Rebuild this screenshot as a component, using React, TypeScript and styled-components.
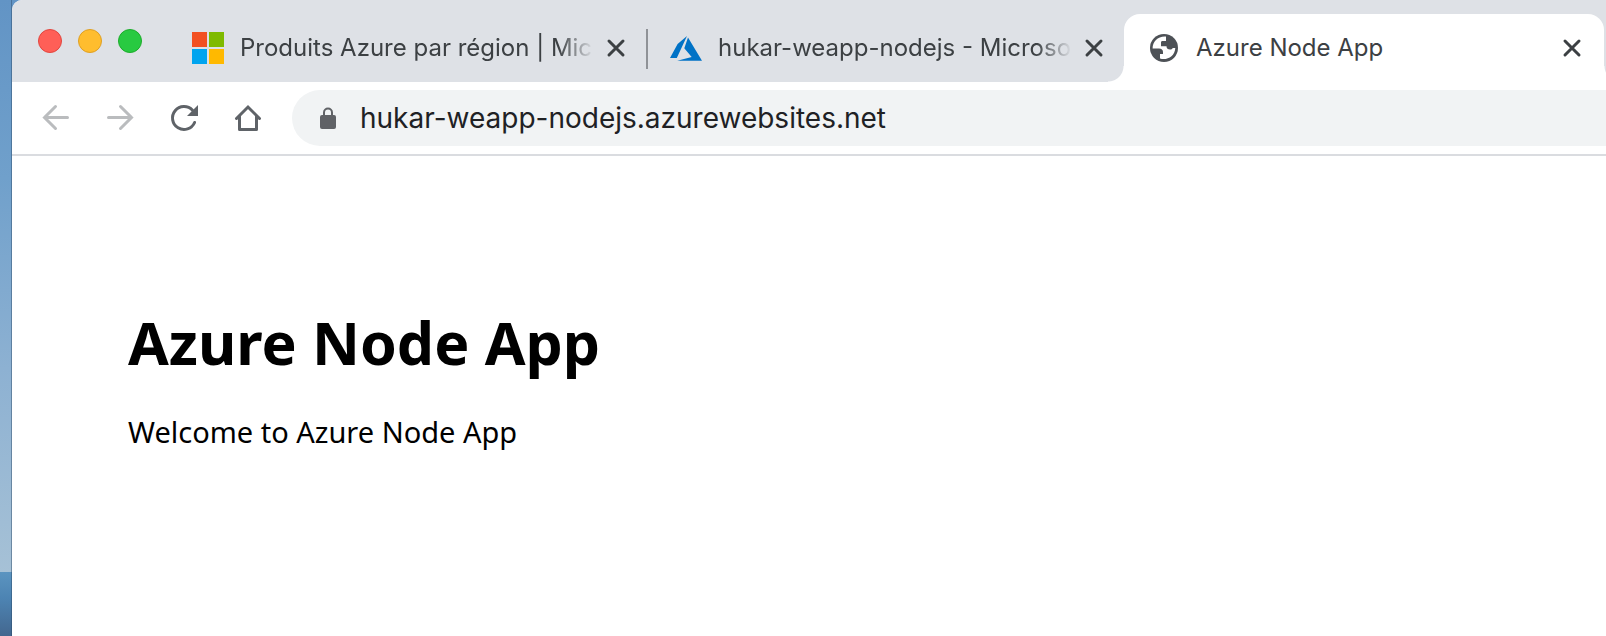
import React, { useState } from 'react';
import styled, { createGlobalStyle, css } from 'styled-components';

const uiFont = "Inter, Roboto, 'Liberation Sans', sans-serif";
const pageFont = "'Noto Sans', 'Open Sans', sans-serif";

const GlobalStyle = createGlobalStyle`
  *, *::before, *::after { box-sizing: border-box; }
  body { margin: 0; background: #fff; }
`;

const Desktop = styled.div`
  display: flex;
  min-height: 100vh;
  padding-left: 12px;
  background:
    linear-gradient(to right, transparent 11px, rgba(40, 70, 100, 0.45) 11px, rgba(40, 70, 100, 0.45) 12px, transparent 12px),
    linear-gradient(to bottom, #6294c5 0%, #70a0cb 28%, #8db1d2 58%, #a6c1d6 90%, #5b94c0 90%, #4d84b3 94%, #43678f 100%);
`;

const BrowserWindow = styled.div`
  display: flex;
  flex: 1;
  flex-direction: column;
  min-width: 0;
  overflow: hidden;
  background: #fff;
  border-top-left-radius: 10px;
`;

const TabStrip = styled.header`
  display: flex;
  height: 82px;
  padding-top: 14px;
  background: #dee1e6;
`;

const WindowControls = styled.div`
  display: flex;
  flex: none;
  gap: 16px;
  width: 156px;
  padding: 15px 0 0 26px;
`;

const WindowButton = styled.button<{ $fill: string; $edge: string }>`
  width: 24px;
  height: 24px;
  padding: 0;
  border: 1px solid ${(p) => p.$edge};
  border-radius: 50%;
  background: ${(p) => p.$fill};
`;

const TabList = styled.nav`
  display: flex;
  flex: 1;
  min-width: 0;
`;

const Tab = styled.div<{ $active: boolean; $divided: boolean }>`
  position: relative;
  display: flex;
  flex: 0 1 ${(p) => (p.$active ? 480 : 478)}px;
  align-items: center;
  min-width: 0;
  padding: 0 ${(p) => (p.$active ? 22 : 20)}px 0 24px;

  ${(p) =>
    p.$divided &&
    css`
      &::before {
        content: '';
        position: absolute;
        top: 15px;
        left: 0;
        width: 2px;
        height: 40px;
        background: #8f9297;
      }
    `}

  ${(p) =>
    p.$active &&
    css`
      background: #fff;
      border-radius: 16px 16px 0 0;

      &::before,
      &::after {
        content: '';
        position: absolute;
        bottom: 0;
        width: 16px;
        height: 16px;
      }
      &::before {
        right: 100%;
        background: radial-gradient(circle at 0 0, transparent 15px, #fff 16px);
      }
      &::after {
        left: 100%;
        background: radial-gradient(circle at 100% 0, transparent 15px, #fff 16px);
      }
    `}
`;

const TabLink = styled.a<{ $fades: boolean }>`
  flex: 1;
  min-width: 0;
  margin-left: 16px;
  overflow: hidden;
  color: #3c4043;
  font: 400 24px/32px ${uiFont};
  text-decoration: none;
  white-space: nowrap;
  ${(p) =>
    p.$fades &&
    css`
      mask-image: linear-gradient(to left, transparent 12px, #000 48px);
    `}
`;

const IconButton = styled.button`
  display: flex;
  flex: none;
  padding: 0;
  border: 0;
  background: none;
  color: #3c4043;
`;

const TabIcon = styled.svg`
  flex: none;
  width: 32px;
  height: 32px;
`;

const Toolbar = styled.div`
  display: flex;
  align-items: center;
  gap: 32px;
  height: 74px;
  padding: 8px 0 8px 28px;
  border-bottom: 2px solid #dadce0;
`;

const NavButton = styled(IconButton)`
  color: #5f6368;
  &:disabled { color: #babcbe; }
`;

const AddressBar = styled.label`
  display: flex;
  flex: 1;
  align-items: center;
  gap: 24px;
  min-width: 0;
  height: 56px;
  margin-left: -4px;
  padding-left: 28px;
  border-radius: 28px 0 0 28px;
  background: #f1f3f4;
`;

const AddressInput = styled.input`
  flex: 1;
  min-width: 0;
  padding: 0;
  border: 0;
  outline: 0;
  background: none;
  color: #202124;
  font: 400 28px/36px ${uiFont};
`;

const Page = styled.main`
  padding: 146px 116px;
  color: #000;
  font-family: ${pageFont};
`;

const Title = styled.h1`
  margin: 0;
  font-size: 59px;
  line-height: 80px;
`;

const Welcome = styled.p`
  margin: 30px 0 0;
  font-size: 29px;
  line-height: 40px;
`;

const MicrosoftIcon = () => (
  <TabIcon viewBox="0 0 32 32" aria-hidden="true">
    <path fill="#f25022" d="M0 0h15v15H0z" />
    <path fill="#7fba00" d="M17 0h15v15H17z" />
    <path fill="#00a4ef" d="M0 17h15v15H0z" />
    <path fill="#ffb900" d="M17 17h15v15H17z" />
  </TabIcon>
);

const AzureIcon = () => (
  <TabIcon viewBox="0 0 32 32" aria-hidden="true">
    <path fill="#0072c6" d="M17 4 7.600 12 0 26h6.800zM18 5.500 14.300 16.200l7.400 8.700L7.200 28.700H32z" />
  </TabIcon>
);

const GlobeIcon = () => (
  <TabIcon viewBox="0 0 32 32" aria-hidden="true">
    <circle cx="16" cy="16" r="14" fill="#4d5156" />
    <path
      fill="#fff"
      d="M18 4.600C10 4 4.600 9.500 4.600 16.500H11c2.500 0 4 1.300 4 3.500v2h-3v4.600c7 2 14.800-2 15.300-10.600h-2.600c-.5 1-1.400 1.600-2.600 1.600-2.200 0-3.600-1-3.600-3.300H13v-3.800c0-1.200.8-1.600 2-1.600h3z"
    />
  </TabIcon>
);

const CloseIcon = () => (
  <svg width="20" height="20" viewBox="0 0 20 20" fill="none" stroke="currentColor" strokeWidth="3" strokeLinecap="round" aria-hidden="true">
    <path d="m3 3 14 14M17 3 3 17" />
  </svg>
);

const ArrowIcon = ({ forward = false }: { forward?: boolean }) => (
  <svg width="32" height="32" viewBox="0 0 32 32" fill="none" stroke="currentColor" strokeWidth="3" strokeLinecap="round" aria-hidden="true">
    <path d={forward ? 'M4.500 15.500h23M16.500 4.500l11 11-11 11' : 'M27.500 15.500h-23M15.500 4.500l-11 11 11 11'} />
  </svg>
);

const ReloadIcon = () => (
  <svg width="32" height="32" viewBox="0 0 32 32" fill="none" aria-hidden="true">
    <path d="M26.600 20.500A11.500 11.500 0 1 1 24.500 8.200" stroke="currentColor" strokeWidth="3" strokeLinecap="round" />
    <path d="M30 3v11H19z" fill="currentColor" />
  </svg>
);

const HomeIcon = () => (
  <svg width="32" height="32" viewBox="0 0 32 32" fill="none" stroke="currentColor" strokeWidth="3" strokeLinecap="round" aria-hidden="true">
    <path d="M4.500 16.500 16 5l11.500 11.500" />
    <path d="M7.500 14.500v13h17v-13" strokeLinejoin="round" />
  </svg>
);

const LockIcon = () => (
  <svg width="16" height="24" viewBox="0 0 16 24" aria-hidden="true">
    <path d="M4 11V6.500a4 4 0 0 1 8 0V11" fill="none" stroke="#606266" strokeWidth="2" />
    <rect y="9" width="16" height="14" rx="2" fill="#606266" />
  </svg>
);

const tabs = [
  { title: 'Produits Azure par région | Mic', Icon: MicrosoftIcon, fades: true },
  { title: 'hukar-weapp-nodejs - Microso', Icon: AzureIcon, fades: true },
  { title: 'Azure Node App', Icon: GlobeIcon, fades: false },
];

const windowButtons = [
  { label: 'Close window', fill: '#ff5f57', edge: '#e2463f' },
  { label: 'Minimize window', fill: '#ffbd2e', edge: '#dfa023' },
  { label: 'Zoom window', fill: '#28ca41', edge: '#1dad2b' },
];

export default function App() {
  const [address, setAddress] = useState('hukar-weapp-nodejs.azurewebsites.net');
  return (
    <>
      <GlobalStyle />
      <Desktop>
        <BrowserWindow>
          <TabStrip>
            <WindowControls>
              {windowButtons.map((b) => (
                <WindowButton key={b.label} aria-label={b.label} $fill={b.fill} $edge={b.edge} />
              ))}
            </WindowControls>
            <TabList aria-label="Tabs">
              {tabs.map(({ title, Icon, fades }, i) => (
                <Tab key={title} $active={i === 2} $divided={i === 1}>
                  <Icon />
                  <TabLink href="#" $fades={fades}>{title}</TabLink>
                  <IconButton aria-label={`Close ${title}`}>
                    <CloseIcon />
                  </IconButton>
                </Tab>
              ))}
            </TabList>
          </TabStrip>
          <Toolbar>
            <NavButton aria-label="Back" disabled><ArrowIcon /></NavButton>
            <NavButton aria-label="Forward" disabled><ArrowIcon forward /></NavButton>
            <NavButton aria-label="Reload"><ReloadIcon /></NavButton>
            <NavButton aria-label="Home"><HomeIcon /></NavButton>
            <AddressBar>
              <LockIcon />
              <AddressInput aria-label="Address" value={address} onChange={(e) => setAddress(e.target.value)} />
            </AddressBar>
          </Toolbar>
          <Page>
            <Title>Azure Node App</Title>
            <Welcome>Welcome to Azure Node App</Welcome>
          </Page>
        </BrowserWindow>
      </Desktop>
    </>
  );
}
